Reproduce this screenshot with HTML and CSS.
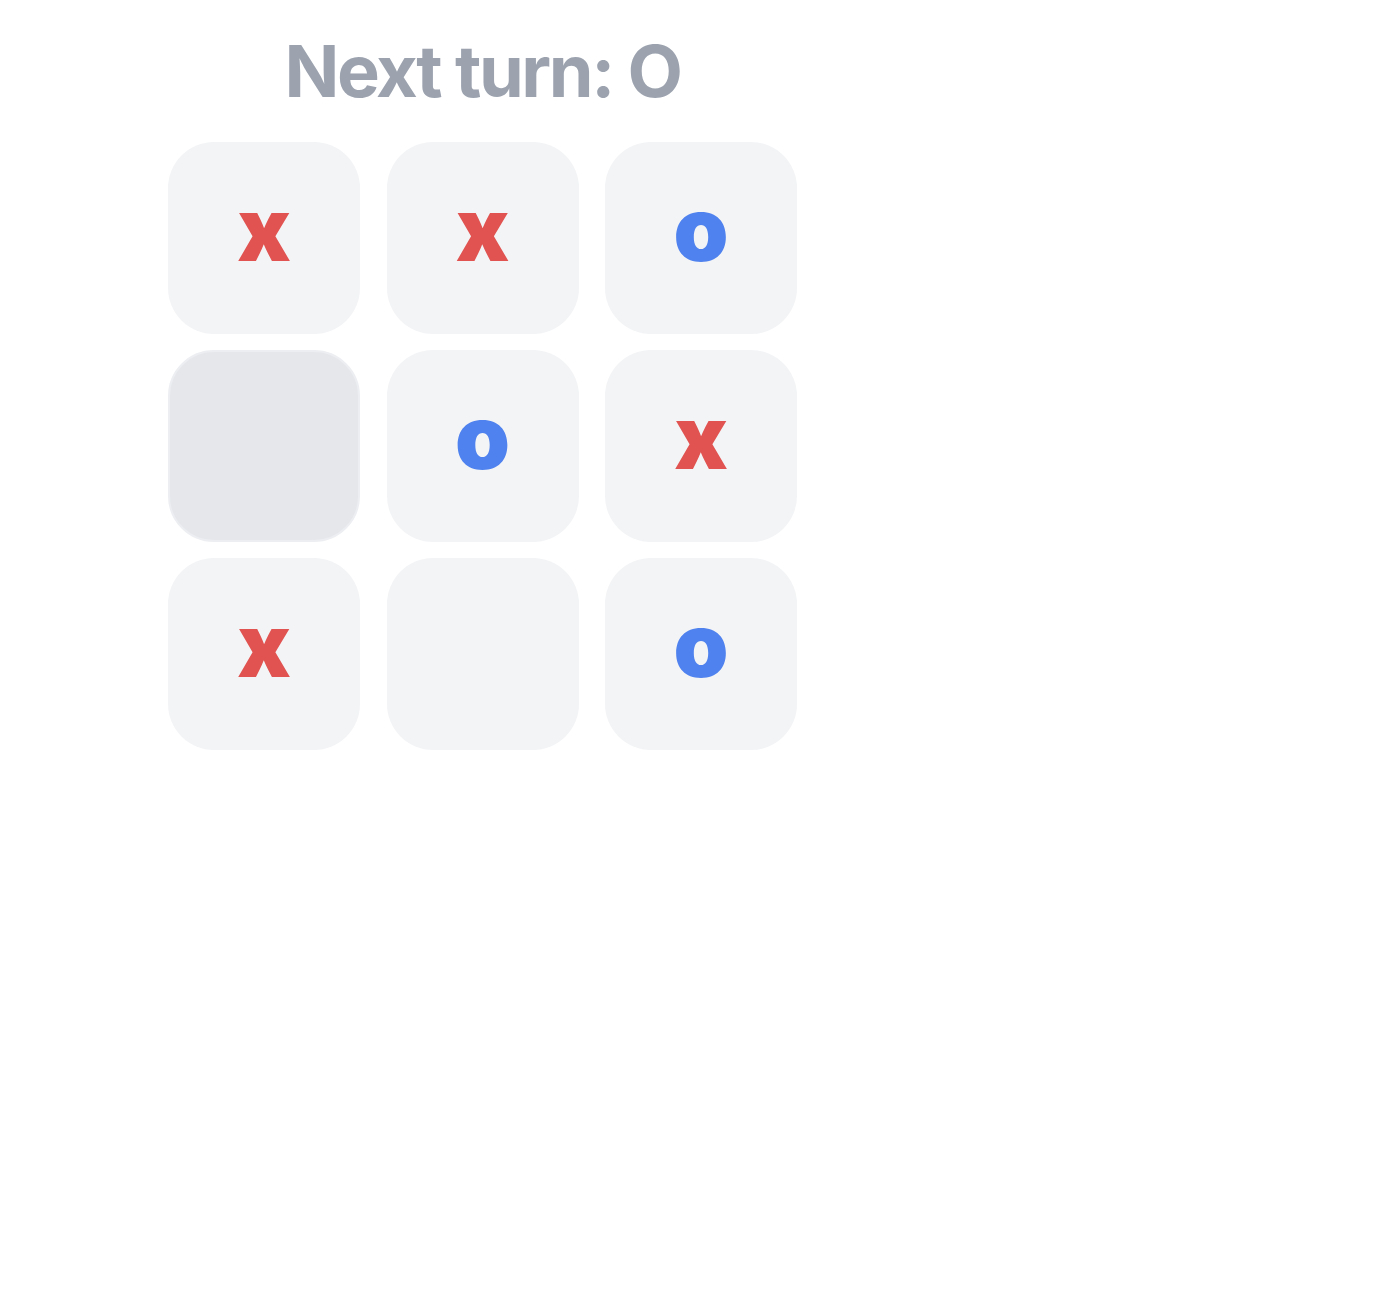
FILE: index.html
```html
<!DOCTYPE html>
<html lang="en">
<head>
<meta charset="utf-8">
<title>Tic Tac Toe</title>
<link rel="stylesheet" href="styles.css">
</head>
<body>
<main class="game">
  <h1 class="status">Next turn: O</h1>
  <div class="board">
    <button class="cell x">x</button>
    <button class="cell x">x</button>
    <button class="cell o">o</button>
    <button class="cell hover"></button>
    <button class="cell o">o</button>
    <button class="cell x">x</button>
    <button class="cell x">x</button>
    <button class="cell"></button>
    <button class="cell o">o</button>
  </div>
</main>
</body>
</html>
```

FILE: styles.css
```css
html, body {
  margin: 0;
  padding: 0;
  background: #ffffff;
}

body {
  font-family: Inter, "Noto Sans", "Liberation Sans", sans-serif;
}

.game {
  display: flex;
  flex-direction: column;
  align-items: flex-start;
  padding: 35px 0 0 168px;
}

.status {
  width: 629px;
  margin: 0 0 35px 0;
  text-align: center;
  font-size: 72px;
  line-height: 1;
  font-weight: 700;
  letter-spacing: -2.4px;
  color: #9ca3af;
}

.board {
  display: grid;
  grid-template-columns: repeat(3, 192px);
  grid-auto-rows: 192px;
  column-gap: 26.5px;
  row-gap: 16px;
}

.cell {
  box-sizing: border-box;
  width: 192px;
  height: 192px;
  border: none;
  border-radius: 46px;
  background: #f3f4f6;
  display: flex;
  align-items: center;
  justify-content: center;
  padding: 0 0 18px 0;
  font-family: Inter, "Noto Sans", "Liberation Sans", sans-serif;
  font-size: 88px;
  font-weight: 900;
  line-height: 1;
  cursor: pointer;
}

.cell.x {
  color: #e05350;
}

.cell.o {
  color: #4f82ee;
}

.cell.hover {
  background: #e5e7eb;
  border: 2px solid #eceef1;
}
```
